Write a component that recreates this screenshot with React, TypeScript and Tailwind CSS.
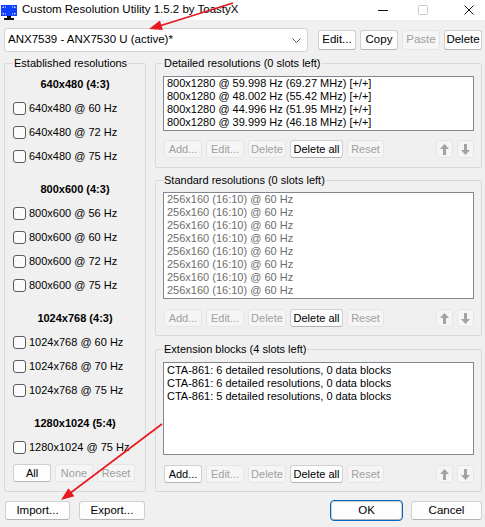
import clsx from "clsx";
import type { ReactNode } from "react";

const DETAILED = [
  "800x1280 @ 59.998 Hz (69.27 MHz) [+/+]",
  "800x1280 @ 48.002 Hz (55.42 MHz) [+/+]",
  "800x1280 @ 44.996 Hz (51.95 MHz) [+/+]",
  "800x1280 @ 39.999 Hz (46.18 MHz) [+/+]",
];

const STANDARD = Array.from({ length: 8 }, () => "256x160 (16:10) @ 60 Hz");

const EXTENSIONS = [
  "CTA-861: 6 detailed resolutions, 0 data blocks",
  "CTA-861: 6 detailed resolutions, 0 data blocks",
  "CTA-861: 5 detailed resolutions, 0 data blocks",
];

const ESTABLISHED = [
  { title: "640x480 (4:3)", rows: ["640x480 @ 60 Hz", "640x480 @ 72 Hz", "640x480 @ 75 Hz"] },
  { title: "800x600 (4:3)", rows: ["800x600 @ 56 Hz", "800x600 @ 60 Hz", "800x600 @ 72 Hz", "800x600 @ 75 Hz"] },
  { title: "1024x768 (4:3)", rows: ["1024x768 @ 60 Hz", "1024x768 @ 70 Hz", "1024x768 @ 75 Hz"] },
  { title: "1280x1024 (5:4)", rows: ["1280x1024 @ 75 Hz"] },
];

function Btn({ children, disabled, className }: { children: ReactNode; disabled?: boolean; className?: string }) {
  return (
    <div
      className={clsx(
        "flex shrink-0 items-center justify-center rounded-[3px] border leading-none",
        disabled
          ? "border-[#e5e5e5] bg-[#f5f5f5] text-[#a0a0a0]"
          : "border-[#d0d0d0] border-b-[#b4b4b4] bg-[#fdfdfd] text-black",
        className
      )}
    >
      {children}
    </div>
  );
}

function Arrow({ down }: { down?: boolean }) {
  return (
    <svg width="9" height="11" viewBox="0 0 9 11" className={down ? "rotate-180" : ""}>
      <polygon points="4.5,0 9,5 6,5 6,11 3,11 3,5 0,5" fill="#a3a3a3" />
    </svg>
  );
}

function ListButtons({ addEnabled }: { addEnabled?: boolean }) {
  return (
    <div className="flex h-[18px] gap-[4px]">
      <Btn disabled={!addEnabled} className="ml-[1px] w-[38px]">Add...</Btn>
      <Btn disabled className="w-[38px]">Edit...</Btn>
      <Btn disabled className="w-[38px]">Delete</Btn>
      <Btn className="w-[53px]">Delete all</Btn>
      <Btn disabled className="w-[37px]">Reset</Btn>
      <Btn disabled className="ml-auto w-[17px]"><Arrow /></Btn>
      <Btn disabled className="w-[17px]"><Arrow down /></Btn>
    </div>
  );
}

function Group({ title, className, children }: { title: string; className?: string; children: ReactNode }) {
  return (
    <fieldset className={clsx("rounded-[2px] border border-[#d9d9d9]", className)}>
      <legend className="px-[1px] leading-[14px]">{title}</legend>
      {children}
    </fieldset>
  );
}

function ListBox({ items, gray, className }: { items: string[]; gray?: boolean; className?: string }) {
  return (
    <div className={clsx("border border-[#82878f] bg-white px-[3px] leading-[13px]", gray ? "text-[#6d6d6d]" : "text-black", className)}>
      {items.map((t, i) => (
        <div key={i} className="whitespace-nowrap">{t}</div>
      ))}
    </div>
  );
}

export default function App() {
  return (
    <div className="relative h-[527px] w-[485px] overflow-hidden bg-[#f0f0f0] font-['Liberation_Sans',Arial,sans-serif] text-[11px] text-black">
      {/* title bar */}
      <div className="flex h-[20px] items-center bg-white">
        <svg width="17" height="15" viewBox="0 0 17 15" className="ml-[1px] mt-[4px]">
          <rect x="0" y="0" width="16" height="11" fill="#1040ff" />
          <path d="M2 2h3M2 2v2M14 2h-3M14 2v2M2 9h3M2 9v-2M14 9h-3M14 9v-2" stroke="#fff" strokeWidth="1" strokeDasharray="1 1" fill="none" />
          <rect x="6" y="11" width="4" height="2" fill="#111" />
          <rect x="3" y="13" width="10" height="2" fill="#111" />
        </svg>
        <span className="ml-[4px] text-[11.5px]">Custom Resolution Utility 1.5.2 by ToastyX</span>
        <div className="ml-auto flex items-center">
          <svg width="10" height="10" viewBox="0 0 10 10">
            <line x1="0" y1="5.5" x2="10" y2="5.5" stroke="#111" strokeWidth="1" />
          </svg>
          <svg width="10" height="10" viewBox="0 0 10 10" className="ml-[30px]">
            <rect x="0.5" y="0.5" width="9" height="9" rx="1" fill="none" stroke="#c6c6c6" />
          </svg>
          <svg width="10" height="10" viewBox="0 0 10 10" className="ml-[36px] mr-[11px]">
            <path d="M0.5 0.5L9.5 9.5M9.5 0.5L0.5 9.5" stroke="#111" strokeWidth="1" />
          </svg>
        </div>
      </div>

      <div className="flex flex-col pl-[4px] pr-[3px]">
        {/* monitor selector */}
        <div className="mt-[8px] flex h-[24px] items-center">
          <div className="flex h-[24px] w-[305px] items-center rounded-[3px] border border-[#d4d4d4] bg-white pl-[3px] pr-[4px] text-[11.5px]">
            <span>ANX7539 - ANX7530 U (active)*</span>
            <svg width="9" height="5" viewBox="0 0 9 5" className="ml-auto mr-[2px]">
              <path d="M0.5 0.5L4.5 4.5L8.5 0.5" stroke="#555" fill="none" />
            </svg>
          </div>
          <div className="ml-[10px] flex h-[20px] gap-[4px] text-[11.5px]">
            <Btn className="w-[38px]">Edit...</Btn>
            <Btn className="w-[38px]">Copy</Btn>
            <Btn disabled className="w-[38px]">Paste</Btn>
            <Btn className="w-[38px]">Delete</Btn>
          </div>
        </div>

        {/* main area */}
        <div className="mt-[4px] flex gap-[9px]">
          <Group title="Established resolutions" className="h-[436px] w-[142px] shrink-0 px-[8px] pt-[2px]">
            <div className="-ml-[1px] -mr-[1px] flex flex-col">
              {ESTABLISHED.map((sec, si) => (
                <div key={sec.title} className={si > 0 ? "mt-[9px]" : ""}>
                  <div className="flex h-[24px] items-center justify-center font-bold">{sec.title}</div>
                  {sec.rows.map((r) => (
                    <div key={r} className="flex h-[24px] items-center pl-[1px]">
                      <div className="h-[13px] w-[13px] rounded-[3px] border border-[#5a5a5a] bg-[#fbfbfb]" />
                      <span className="ml-[3px]">{r}</span>
                    </div>
                  ))}
                </div>
              ))}
            </div>
            <div className="mt-[5px] flex h-[18px] gap-[4px]">
              <Btn className="w-[38px]">All</Btn>
              <Btn disabled className="w-[38px]">None</Btn>
              <Btn disabled className="w-[38px]">Reset</Btn>
            </div>
          </Group>

          <div className="flex w-[327px] flex-col">
            <Group title="Detailed resolutions (0 slots left)" className="h-[112px] px-[7px] pt-[6px]">
              <ListBox items={DETAILED} className="h-[55px]" />
              <div className="mt-[9px]">
                <ListButtons />
              </div>
            </Group>
            <Group title="Standard resolutions (0 slots left)" className="mt-[5px] h-[163px] px-[7px] pt-[5px]">
              <ListBox items={STANDARD} gray className="h-[107px]" />
              <div className="mt-[10px]">
                <ListButtons />
              </div>
            </Group>
            <Group title="Extension blocks (4 slots left)" className="mt-[6px] h-[150px] px-[7px] pt-[6px]">
              <ListBox items={EXTENSIONS} className="h-[93px] pt-[1px]" />
              <div className="mt-[10px]">
                <ListButtons addEnabled />
              </div>
            </Group>
          </div>
        </div>

        {/* bottom buttons */}
        <div className="mt-[9px] flex h-[19px] text-[11.5px]">
          <Btn className="ml-[1px] w-[65px]">Import...</Btn>
          <Btn className="ml-[9px] w-[66px]">Export...</Btn>
          <Btn className="ml-auto w-[71px] border-[#0067c0] border-b-[#0067c0] outline outline-1 outline-[#0067c0]">OK</Btn>
          <Btn className="ml-[9px] w-[71px]">Cancel</Btn>
        </div>
      </div>

      {/* red annotation arrows */}
      <svg className="pointer-events-none absolute inset-0" width="485" height="527" viewBox="0 0 485 527">
        <line x1="233" y1="3" x2="161" y2="25.5" stroke="#e8191e" strokeWidth="1.6" />
        <polygon points="149,29 159.9,20.4 162.9,29.9" fill="#e8191e" />
        <line x1="162" y1="424" x2="71" y2="492.5" stroke="#e8191e" strokeWidth="1.6" />
        <polygon points="61,500 68.4,488.2 74.4,496.2" fill="#e8191e" />
      </svg>
    </div>
  );
}
